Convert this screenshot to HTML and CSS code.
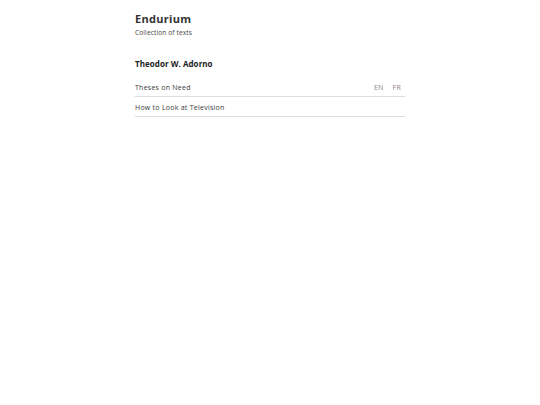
FILE: index.html
```
<!DOCTYPE html>
<html>
<head>
<meta charset="utf-8">
<link rel="stylesheet" href="styles.css">
</head>
<body>
<main class="page">
  <header class="site-header">
    <h1 class="site-title">Endurium</h1>
    <p class="site-sub">Collection of texts</p>
  </header>
  <section class="author">
    <h2 class="author-name">Theodor W. Adorno</h2>
    <ul class="texts">
      <li class="text-row"><span class="text-title">Theses on Need</span><span class="langs"><span class="lang">EN</span><span class="lang">FR</span></span></li>
      <li class="text-row"><span class="text-title">How to Look at Television</span></li>
    </ul>
  </section>
</main>
</body>
</html>
```
FILE: styles.css
```
html, body { margin: 0; padding: 0; background: #fff; }
body { font-family: "Open Sans", sans-serif; color: #222; }
.page { width: 270px; margin: 0 auto; padding-top: 12px; }
.site-title { font-size: 11px; font-weight: 700; margin: 0; line-height: 14px; letter-spacing: 0.3px; color: #333; }
.site-sub { font-size: 6.5px; margin: 2px 0 0; line-height: 9px; color: #444; letter-spacing: 0.15px; }
.author { margin-top: 21px; }
.author-name { font-size: 8px; font-weight: 700; margin: 0 0 8px; line-height: 11px; letter-spacing: 0.05px; color: #222; }
.texts { list-style: none; margin: 0; padding: 0; }
.text-row { display: flex; justify-content: space-between; align-items: center; font-size: 7px; line-height: 10px; padding: 6px 0 3px; border-bottom: 1px solid #ddd; color: #3a3a3a; letter-spacing: 0.25px; }
.langs { display: flex; gap: 9px; padding-right: 4px; color: #888; }
```
